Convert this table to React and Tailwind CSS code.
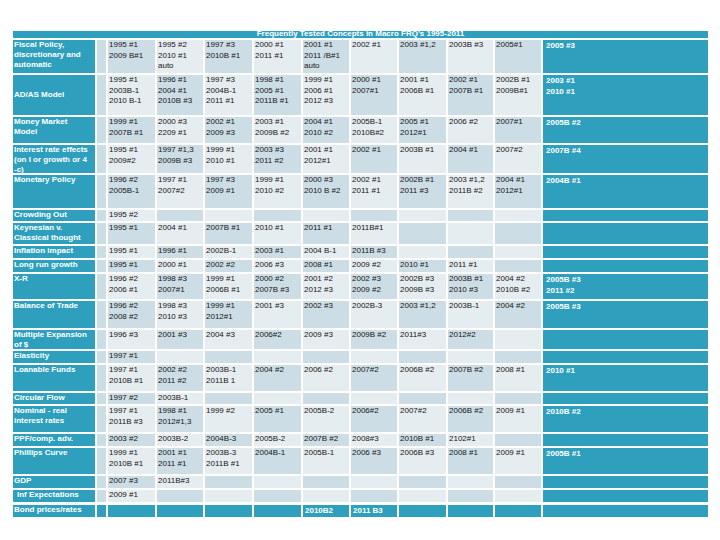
import React from "react";

// Frequently tested concepts table (Macro FRQ's 1995-2011)
const COLS =
  "grid grid-cols-[82px_9px_47px_46px_47px_47px_46px_46px_47px_45px_46px_165px] gap-x-[2px]";

const DARK = "bg-[#cddde5]";
const LIGHT = "bg-[#e6edf1]";
const TEAL = "bg-[#2e9fbd]";

const rows = [
  {
    label: ["Fiscal Policy,", "discretionary and", "automatic"],
    h: "h-[33px]",
    cells: [["1995 #1", "2009 B#1"], ["1995 #2", "2010 #1", "auto"], ["1997 #3", "2010B #1"], ["2000 #1", "2011 #1"], ["2001 #1", "2011 /B#1", "auto"], ["2002 #1"], ["2003 #1,2"], ["2003B #3"], ["2005#1"]],
    right: ["2005 #3"],
  },
  {
    label: ["AD/AS Model"],
    center: true,
    h: "h-[40px]",
    cells: [["1995 #1", "2003B-1", "2010 B-1"], ["1996 #1", "2004 #1", "2010B #3"], ["1997 #3", "2004B-1", "2011 #1"], ["1998 #1", "2005 #1", "2011B #1"], ["1999 #1", "2006 #1", "2012 #3"], ["2000 #1", "2007#1"], ["2001 #1", "2006B #1"], ["2002 #1", "2007B #1"], ["2002B #1", "2009B#1"]],
    right: ["2003 #1", "2010 #1"],
  },
  {
    label: ["Money Market", "Model"],
    h: "h-[26px]",
    cells: [["1999 #1", "2007B #1"], ["2000 #3", "2209 #1"], ["2002 #1", "2009 #3"], ["2003 #1", "2009B #2"], ["2004 #1", "2010 #2"], ["2005B-1", "2010B#2"], ["2005 #1", "2012#1"], ["2006 #2"], ["2007#1"]],
    right: ["2005B #2"],
  },
  {
    label: ["Interest rate effects", "(on I or growth or 4", "-c)"],
    h: "h-[28px]",
    cells: [["1995 #1", "2009#2"], ["1997 #1,3", "2009B #3"], ["1999 #1", "2010 #1"], ["2003 #3", "2011 #2"], ["2001 #1", "2012#1"], ["2002 #1"], ["2003B #1"], ["2004 #1"], ["2007#2"]],
    right: ["2007B #4"],
  },
  {
    label: ["Monetary Policy"],
    h: "h-[33px]",
    cells: [["1996 #2", "2005B-1"], ["1997 #1", "2007#2"], ["1997 #3", "2009 #1"], ["1999 #1", "2010 #2"], ["2000 #3", "2010 B #2"], ["2002 #1", "2011 #1"], ["2002B #1", "2011 #3"], ["2003 #1,2", "2011B #2"], ["2004 #1", "2012#1"]],
    right: ["2004B #1"],
  },
  { label: ["Crowding Out"], h: "h-[11px]", cells: [["1995 #2"]] },
  {
    label: ["Keynesian v.", "Classical thought"],
    h: "h-[21px]",
    cells: [["1995 #1"], ["2004 #1"], ["2007B #1"], ["2010 #1"], ["2011 #1"], ["2011B#1"]],
  },
  {
    label: ["Inflation impact"],
    h: "h-[12px]",
    cells: [["1995 #1"], ["1996 #1"], ["2002B-1"], ["2003 #1"], ["2004 B-1"], ["2011B #3"]],
  },
  {
    label: ["Long run growth"],
    h: "h-[12px]",
    cells: [["1995 #1"], ["2000 #1"], ["2002 #2"], ["2006 #3"], ["2008 #1"], ["2009 #2"], ["2010 #1"], ["2011 #1"]],
  },
  {
    label: ["X-R"],
    h: "h-[25px]",
    cells: [["1996 #2", "2006 #1"], ["1998 #3", "2007#1"], ["1999 #1", "2006B #1"], ["2000 #2", "2007B #3"], ["2001 #2", "2012 #3"], ["2002 #3", "2009 #2"], ["2002B #3", "2009B #3"], ["2003B #1", "2010 #3"], ["2004 #2", "2010B #2"]],
    right: ["2005B #3", "2011 #2"],
  },
  {
    label: ["Balance of Trade"],
    h: "h-[27px]",
    cells: [["1996 #2", "2008 #2"], ["1998 #3", "2010 #3"], ["1999 #1", "2012#1"], ["2001 #3"], ["2002 #3"], ["2002B-3"], ["2003 #1,2"], ["2003B-1"], ["2004 #2"]],
    right: ["2005B #3"],
  },
  {
    label: ["Multiple Expansion", "of $"],
    h: "h-[19px]",
    cells: [["1996 #3"], ["2001 #3"], ["2004 #3"], ["2006#2"], ["2009 #3"], ["2009B #2"], ["2011#3"], ["2012#2"]],
  },
  { label: ["Elasticity"], h: "h-[12px]", cells: [["1997 #1"]] },
  {
    label: ["Loanable Funds"],
    h: "h-[26px]",
    cells: [["1997 #1", "2010B #1"], ["2002 #2", "2011 #2"], ["2003B-1", "2011B 1"], ["2004 #2"], ["2006 #2"], ["2007#2"], ["2006B #2"], ["2007B #2"], ["2008 #1"]],
    right: ["2010 #1"],
  },
  { label: ["Circular Flow"], h: "h-[11px]", cells: [["1997 #2"], ["2003B-1"]] },
  {
    label: ["Nominal - real", "interest rates"],
    h: "h-[26px]",
    cells: [["1997 #1", "2011B #3"], ["1998 #1", "2012#1,3"], ["1999 #2"], ["2005 #1"], ["2005B-2"], ["2006#2"], ["2007#2"], ["2006B #2"], ["2009 #1"]],
    right: ["2010B #2"],
  },
  {
    label: ["PPF/comp. adv."],
    h: "h-[12px]",
    cells: [["2003 #2"], ["2003B-2"], ["2004B-3"], ["2005B-2"], ["2007B #2"], ["2008#3"], ["2010B #1"], ["2102#1"]],
  },
  {
    label: ["Phillips Curve"],
    h: "h-[26px]",
    cells: [["1999 #1", "2010B #1"], ["2001 #1", "2011 #1"], ["2003B-3", "2011B #1"], ["2004B-1"], ["2005B-1"], ["2006 #3"], ["2006B #3"], ["2008 #1"], ["2009 #1"]],
    right: ["2005B #1"],
  },
  { label: ["GDP"], h: "h-[12px]", cells: [["2007 #3"], ["2011B#3"]] },
  { label: ["Inf Expectations"], indent: true, h: "h-[12px]", cells: [["2009 #1"]] },
];

function Lines({ lines }) {
  return lines.map((l, i) => <div key={i} className="whitespace-nowrap">{l}</div>);
}

function Row({ row, r }) {
  const cells = Array.from({ length: 9 }, (_, c) => row.cells[c] || []);
  return (
    <div className={`${COLS} ${row.h}`}>
      <div
        className={`${TEAL} overflow-hidden text-white font-bold text-[8px] leading-[10px] flex flex-col ${
          row.center ? "justify-center" : ""
        } ${row.indent ? "pl-[4px]" : "pl-[1px]"}`}
      >
        <Lines lines={row.label} />
      </div>
      <div className={DARK} />
      {cells.map((lines, c) => (
        <div
          key={c}
          className={`${(r + c) % 2 === 0 ? DARK : LIGHT} overflow-hidden pl-[1px] text-[8px] leading-[10.5px] text-[#151515]`}
        >
          <Lines lines={lines} />
        </div>
      ))}
      <div className={`${TEAL} overflow-hidden pl-[3px] text-white font-bold text-[8px] leading-[11px]`}>
        <Lines lines={row.right || []} />
      </div>
    </div>
  );
}

export default function App() {
  return (
    <div className="w-[720px] h-[540px] bg-white pt-[31px] pl-[13px] font-['Liberation_Sans',Arial,sans-serif]">
      <div className="w-[695px] flex flex-col gap-y-[2px]">
        {/* title bar */}
        <div className={`${TEAL} h-[7px] flex justify-center items-end`}>
          <span className="text-white font-bold text-[8px] leading-[9px] whitespace-nowrap">
            Frequently Tested Concepts in Macro FRQ's 1995-2011
          </span>
        </div>

        {rows.map((row, r) => (
          <Row key={r} row={row} r={r} />
        ))}

        {/* bottom row, all teal */}
        <div className={`${COLS} h-[12px] mt-[1px]`}>
          <div className={`${TEAL} pl-[1px] text-white font-bold text-[8px] leading-[10px] whitespace-nowrap overflow-hidden`}>
            Bond prices/rates
          </div>
          <div className={TEAL} />
          {Array.from({ length: 9 }, (_, c) => (
            <div key={c} className={`${TEAL} pl-[2px] text-white font-bold text-[8px] leading-[12px] whitespace-nowrap overflow-hidden`}>
              {c === 4 ? "2010B2" : c === 5 ? "2011 B3" : ""}
            </div>
          ))}
          <div className={TEAL} />
        </div>
      </div>
    </div>
  );
}
